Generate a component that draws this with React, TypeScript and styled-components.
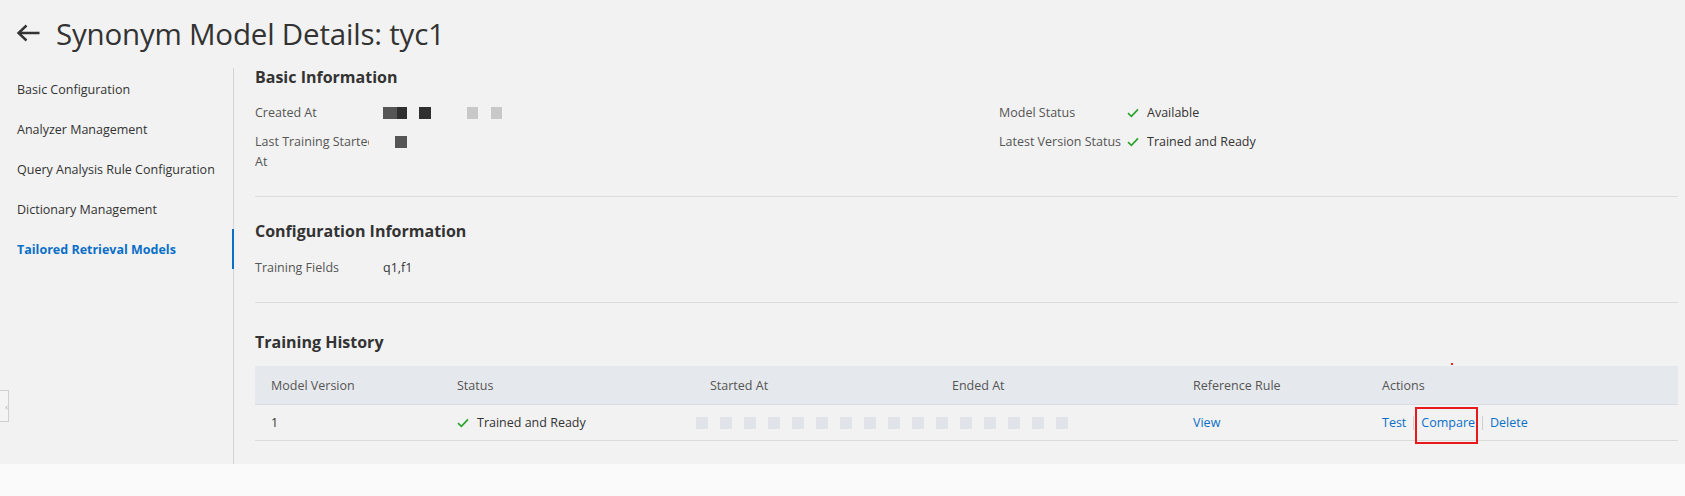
import React from "react";
import styled, { createGlobalStyle } from "styled-components";

const GlobalStyle = createGlobalStyle`
  html, body {
    margin: 0;
    padding: 0;
    background: #fafafa;
  }
  body {
    font-family: "Open Sans", "Noto Sans", "Liberation Sans", sans-serif;
    color: #333;
  }
`;

const BLUE = "#0a6fc7";
const GREEN = "#27a327";

const Page = styled.div`
  width: 1685px;
  height: 496px;
  background: #fafafa;
  overflow: hidden;
`;

const Frame = styled.div`
  height: 464px;
  background: #f2f2f2;
  display: flex;
  flex-direction: column;
`;

const Header = styled.div`
  height: 64px;
  display: flex;
  align-items: center;
  gap: 15px;
  padding: 2px 0 0 16px;
  box-sizing: border-box;
`;

const BackButton = styled.button`
  border: 0;
  background: none;
  padding: 0;
  display: flex;
  cursor: pointer;
`;

const Title = styled.h1`
  margin: 0;
  font-size: 29.5px;
  font-weight: 400;
  color: #333;
  letter-spacing: -0.2px;
`;

const Body = styled.div`
  flex: 1;
  display: flex;
  min-height: 0;
`;

const Sidebar = styled.nav`
  width: 234px;
  box-sizing: border-box;
  border-right: 1px solid #d4d4d4;
  margin-top: 4px;
  padding-top: 1px;
  display: flex;
  flex-direction: column;
  position: relative;
`;

const NavItem = styled.a<{ $active?: boolean }>`
  height: 40px;
  display: flex;
  align-items: center;
  padding-left: 17px;
  font-size: 12.5px;
  color: ${(p) => (p.$active ? BLUE : "#333")};
  font-weight: ${(p) => (p.$active ? 700 : 400)};
  box-shadow: ${(p) => (p.$active ? `inset -2px 0 0 ${BLUE}` : "none")};
  margin-right: -1px;
  cursor: pointer;
`;

const CollapseTab = styled.div`
  position: absolute;
  left: -1px;
  top: 322px;
  width: 8px;
  height: 30px;
  border: 1px solid #cfcfcf;
  background: #f4f4f4;
  font-size: 9px;
  color: #aaa;
  display: flex;
  align-items: center;
  justify-content: flex-end;
  overflow: hidden;
`;

const Content = styled.main`
  flex: 1;
  padding: 1px 7px 0 21px;
  display: flex;
  flex-direction: column;
`;

const Section = styled.section<{ $gap?: number }>`
  display: flex;
  flex-direction: column;
  gap: ${(p) => p.$gap ?? 14}px;
`;

const SectionTitle = styled.h2`
  margin: 0;
  font-size: 16px;
  line-height: 24px;
  font-weight: 700;
  color: #333;
`;

const Divider = styled.hr<{ $top: number; $bottom: number }>`
  border: 0;
  border-top: 1px solid #dcdcdc;
  margin: ${(p) => p.$top}px 0 ${(p) => p.$bottom}px;
`;

const InfoGrid = styled.div`
  display: grid;
  grid-template-columns: 744px 1fr;
`;

const InfoColumn = styled.div`
  display: flex;
  flex-direction: column;
  gap: 9px;
`;

const InfoRow = styled.div`
  display: flex;
  font-size: 12.5px;
  line-height: 20px;
  color: #333;
`;

const Label = styled.div<{ $clip?: boolean }>`
  width: ${(p) => (p.$clip ? 114 : 128)}px;
  margin-right: ${(p) => (p.$clip ? 14 : 0)}px;
  flex: none;
  color: #555;
  white-space: nowrap;
  overflow: ${(p) => (p.$clip ? "hidden" : "visible")};
`;

const Value = styled.div`
  display: flex;
  align-items: center;
  gap: 8px;
`;

const Blur = styled.span`
  display: inline-flex;
  align-items: center;
  height: 20px;
`;

const Pixel = styled.i<{ $w: number; $c: string; $ml?: number }>`
  display: inline-block;
  width: ${(p) => p.$w}px;
  height: 12px;
  background: ${(p) => p.$c};
  margin-left: ${(p) => p.$ml ?? 0}px;
  filter: blur(0.4px);
`;

const Table = styled.div`
  margin-top: 12px;
  font-size: 12.5px;
  color: #333;
`;

const cols = "186px 253px 242px 241px 189px 1fr";

const HeadRow = styled.div`
  display: grid;
  grid-template-columns: ${cols};
  height: 38px;
  align-items: center;
  background: #e5e8ec;
  border-bottom: 1px solid #d9dce0;
  color: #555;
`;

const DataRow = styled.div`
  display: grid;
  grid-template-columns: ${cols};
  height: 35px;
  align-items: center;
  border-bottom: 1px solid #dadada;
`;

const Cell = styled.div<{ $pad?: number; $gap?: number }>`
  padding-left: ${(p) => p.$pad ?? 16}px;
  display: flex;
  align-items: center;
  gap: ${(p) => p.$gap ?? 8}px;
  position: relative;
`;

const Link = styled.a<{ $marked?: boolean }>`
  color: ${BLUE};
  cursor: pointer;
  position: relative;
  line-height: 20px;
  &::after {
    content: "";
    display: ${(p) => (p.$marked ? "block" : "none")};
    position: absolute;
    left: -6px;
    right: -3px;
    top: -6px;
    bottom: -11px;
    border: 2px solid #e8191d;
  }
`;

const Sep = styled.span`
  width: 1px;
  height: 14px;
  background: #d0d0d0;
`;

const Dot = styled.span`
  position: absolute;
  left: 85px;
  top: -14px;
  width: 2px;
  height: 2px;
  background: #ef2020;
`;

const Check = () => (
  <svg width="12" height="10" viewBox="0 0 12 10">
    <polyline points="1,5.2 4.4,8.4 11,1.4" fill="none" stroke={GREEN} strokeWidth="1.6" />
  </svg>
);

const navItems = [
  "Basic Configuration",
  "Analyzer Management",
  "Query Analysis Rule Configuration",
  "Dictionary Management",
  "Tailored Retrieval Models",
];

const headers = ["Model Version", "Status", "Started At", "Ended At", "Reference Rule", "Actions"];

const stripe = (n: number) => (
  <Blur>
    {Array.from({ length: n }).map((_, i) => (
      <Pixel key={i} $w={12} $c="#e0e3e8" $ml={i === 0 ? 0 : 12} />
    ))}
  </Blur>
);

export default function App() {
  return (
    <Page>
      <GlobalStyle />
      <Frame>
        <Header>
          <BackButton aria-label="Back">
            <svg width="25" height="20" viewBox="0 0 25 20">
              <path d="M23.5 10H2.5M10.5 2.5L2.5 10l8 7.5" fill="none" stroke="#333" strokeWidth="2.4" />
            </svg>
          </BackButton>
          <Title>Synonym Model Details: tyc1</Title>
        </Header>
        <Body>
          <Sidebar>
            {navItems.map((t, i) => (
              <NavItem key={t} $active={i === navItems.length - 1}>
                {t}
              </NavItem>
            ))}
            <CollapseTab>‹</CollapseTab>
          </Sidebar>
          <Content>
            <Section>
              <SectionTitle>Basic Information</SectionTitle>
              <InfoGrid>
                <InfoColumn>
                  <InfoRow>
                    <Label $clip>Created At</Label>
                    <Blur>
                      <Pixel $w={14} $c="#555" />
                      <Pixel $w={10} $c="#2f2f2f" />
                      <Pixel $w={12} $c="#2f2f2f" $ml={12} />
                      <Pixel $w={11} $c="#c8c8c8" $ml={36} />
                      <Pixel $w={11} $c="#c8c8c8" $ml={13} />
                    </Blur>
                  </InfoRow>
                  <InfoRow>
                    <Label $clip>
                      Last Training Started
                      <br />
                      At
                    </Label>
                    <Blur style={{ alignSelf: "flex-start" }}>
                      <Pixel $w={12} $c="#555" $ml={12} />
                    </Blur>
                  </InfoRow>
                </InfoColumn>
                <InfoColumn>
                  <InfoRow>
                    <Label>Model Status</Label>
                    <Value>
                      <Check />
                      Available
                    </Value>
                  </InfoRow>
                  <InfoRow>
                    <Label>Latest Version Status</Label>
                    <Value>
                      <Check />
                      Trained and Ready
                    </Value>
                  </InfoRow>
                </InfoColumn>
              </InfoGrid>
            </Section>
            <Divider $top={24} $bottom={22} />
            <Section $gap={15}>
              <SectionTitle>Configuration Information</SectionTitle>
              <InfoRow>
                <Label>Training Fields</Label>
                <span>q1,f1</span>
              </InfoRow>
            </Section>
            <Divider $top={24} $bottom={27} />
            <Section $gap={0}>
              <SectionTitle>Training History</SectionTitle>
              <Table>
                <HeadRow>
                  {headers.map((h) => (
                    <Cell key={h}>
                      {h}
                      {h === "Actions" && <Dot />}
                    </Cell>
                  ))}
                </HeadRow>
                <DataRow>
                  <Cell>1</Cell>
                  <Cell>
                    <Check />
                    Trained and Ready
                  </Cell>
                  <Cell $pad={2}>{stripe(10)}</Cell>
                  <Cell $pad={0}>{stripe(6)}</Cell>
                  <Cell>
                    <Link>View</Link>
                  </Cell>
                  <Cell $gap={7}>
                    <Link>Test</Link>
                    <Sep />
                    <Link $marked>Compare</Link>
                    <Sep />
                    <Link>Delete</Link>
                  </Cell>
                </DataRow>
              </Table>
            </Section>
          </Content>
        </Body>
      </Frame>
    </Page>
  );
}
